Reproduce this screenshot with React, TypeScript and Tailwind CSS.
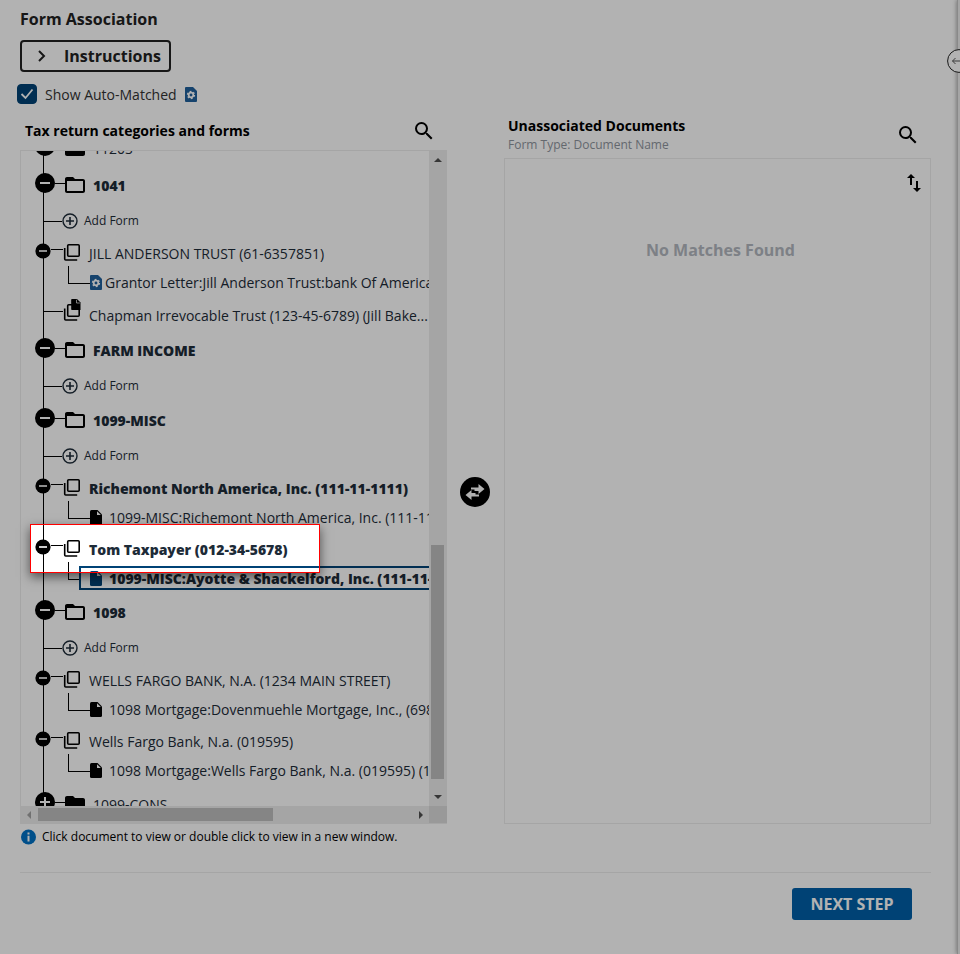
import clsx from 'clsx'
import React, { useState } from 'react'
import { MdFolder, MdFolderOpen, MdSearch } from 'react-icons/md'

// ─── Tree data ───────────────────────────────────────────────────────────────

type TreeRow =
  | { kind: 'category'; label: string; open?: boolean; tall?: boolean }
  | { kind: 'add' }
  | { kind: 'form'; label: string; bold?: boolean }
  | { kind: 'prior'; label: string }
  | { kind: 'doc'; label: string; auto?: boolean; selected?: boolean }

const ROWS: TreeRow[] = [
  { kind: 'category', label: '1120S', tall: true },
  { kind: 'category', label: '1041', open: true },
  { kind: 'add' },
  { kind: 'form', label: 'JILL ANDERSON TRUST (61-6357851)' },
  {
    kind: 'doc',
    label: 'Grantor Letter:Jill Anderson Trust:bank Of America',
    auto: true,
  },
  { kind: 'prior', label: 'Chapman Irrevocable Trust (123-45-6789) (Jill Bake...' },
  { kind: 'category', label: 'FARM INCOME', open: true },
  { kind: 'add' },
  { kind: 'category', label: '1099-MISC', open: true },
  { kind: 'add' },
  { kind: 'form', label: 'Richemont North America, Inc. (111-11-1111)', bold: true },
  { kind: 'doc', label: '1099-MISC:Richemont North America, Inc. (111-11-1111)' },
  { kind: 'form', label: 'Tom Taxpayer (012-34-5678)', bold: true },
  {
    kind: 'doc',
    label: '1099-MISC:Ayotte & Shackelford, Inc. (111-11-1111)',
    selected: true,
  },
  { kind: 'category', label: '1098', open: true },
  { kind: 'add' },
  { kind: 'form', label: 'WELLS FARGO BANK, N.A. (1234 MAIN STREET)' },
  { kind: 'doc', label: '1098 Mortgage:Dovenmuehle Mortgage, Inc., (698)' },
  { kind: 'form', label: 'Wells Fargo Bank, N.a. (019595)' },
  { kind: 'doc', label: '1098 Mortgage:Wells Fargo Bank, N.a. (019595) (1)' },
  { kind: 'category', label: '1099-CONS' },
]

// ─── Icons ───────────────────────────────────────────────────────────────────

function Toggle({ open, size }: { open: boolean; size: 'lg' | 'sm' }) {
  return (
    <svg
      viewBox="0 0 20 20"
      className={clsx(
        'relative block shrink-0',
        size === 'lg' ? 'size-5' : 'size-4',
      )}>
      <circle cx="10" cy="10" r={size === 'lg' ? 10 : 9.5} fill="#000" />
      <path
        d={open ? 'M5 10h10' : 'M5 10h10M10 5v10'}
        stroke="#fff"
        strokeWidth="2"
      />
    </svg>
  )
}

function StackIcon() {
  return (
    <svg viewBox="0 0 17 17" className="mb-[3px] size-[17px] shrink-0" fill="none">
      <rect x="4.7" y=".8" width="11.500" height="11.500" rx="1" stroke="#000" strokeWidth="1.600" />
      <path d="M1.700 4V15q0 1 1 1h11.500" stroke="#000" strokeWidth="1.600" />
    </svg>
  )
}

function PriorStackIcon() {
  return (
    <svg viewBox="0 0 18 22" className="mb-2.5 h-[22px] w-[18px] shrink-0" fill="none">
      <rect x="4.700" y="5.800" width="11.500" height="11.500" rx="1" stroke="#000" strokeWidth="1.600" />
      <path d="M1.700 9.500V20q0 1 1 1h11.500" stroke="#000" strokeWidth="1.600" />
      <path d="M9 0h5L17.500 3.500V11H9q-.8 0-.8-.8V.8Q8.200 0 9 0z" fill="#000" />
      <path d="M13.500 .8V4h3.400" stroke="#fff" strokeWidth=".7" />
    </svg>
  )
}

function FileIcon({ color }: { color: string }) {
  return (
    <svg viewBox="0 0 12 15" className="h-[15px] w-3 shrink-0">
      <path
        d="M1.500 0H7.500L12 4.500V13.500Q12 15 10.500 15H1.500Q0 15 0 13.500V1.500Q0 0 1.500 0z"
        fill={color}
      />
      <path d="M7 1.200V5h3.900z" fill="#fff" />
    </svg>
  )
}

function AutoFileIcon() {
  return (
    <svg viewBox="0 0 12 15" className="h-[15px] w-3 shrink-0">
      <path
        d="M1 0H8L12 4V14Q12 15 11 15H1Q0 15 0 14V1Q0 0 1 0z"
        fill="#20609c"
      />
      <g stroke="#fff" fill="none">
        <circle cx="6" cy="8" r="2.300" strokeWidth="1.700" />
        <circle cx="6" cy="8" r="3.600" strokeWidth="1.100" strokeDasharray="1.900 1.870" />
      </g>
    </svg>
  )
}

function AddIcon() {
  return (
    <svg viewBox="0 0 16 16" className="size-4 shrink-0" fill="none" stroke="#1d2b38">
      <circle cx="8" cy="8" r="7" strokeWidth="1.400" />
      <path d="M4 8h8M8 4v8" strokeWidth="1.600" />
    </svg>
  )
}

function SwapIcon() {
  return (
    <svg viewBox="0 0 30 30" className="block size-[30px]">
      <circle cx="15" cy="15" r="15" fill="#000" />
      <path
        d="M11 10.500h7.500V7l6 5-6 5v-3H14.500v-1.500H11zM19 19.500h-7.500V23l-6-5 6-5v3h4v1.500H19z"
        fill="#fff"
      />
    </svg>
  )
}

function SortIcon() {
  return (
    <svg viewBox="0 0 14 18" className="h-[18px] w-3.5">
      <path
        d="M0 4L4 0l4 4H5v7H3V4zM6 14h3V7h2v7h3l-4 4z"
        fill="#000"
      />
    </svg>
  )
}

// ─── Tree rows ───────────────────────────────────────────────────────────────

function Row({ row }: { row: TreeRow }) {
  switch (row.kind) {
    case 'category': {
      const Folder = row.open ? MdFolderOpen : MdFolder
      return (
        <li
          className={clsx(
            'flex items-center pl-3.5',
            row.tall ? 'h-[38px]' : 'h-9',
          )}>
          <button
            type="button"
            aria-label={`Toggle ${row.label}`}
            className="mb-1.5 flex items-center">
            <Toggle open={!!row.open} size="lg" />
            <span className="h-px w-2.5 bg-black" />
          </button>
          <Folder className="-mx-0.5 mb-0.5 size-6 shrink-0" color="#000" />
          <span className={clsx('mb-0.5 ml-2', row.open && 'font-extrabold')}>
            {row.label}
          </span>
        </li>
      )
    }
    case 'add':
      return (
        <li className="flex h-[34px] items-center pl-[22px]">
          <span className="h-px w-[19px] bg-black" />
          <button type="button" className="flex items-center gap-1.5 text-xs">
            <AddIcon />
            Add Form
          </button>
        </li>
      )
    case 'form':
      return (
        <li className="flex h-[31px] items-center pl-3.5">
          <button
            type="button"
            aria-label={`Toggle ${row.label}`}
            className="mb-[5px]">
            <Toggle open size="sm" />
          </button>
          <span className="mb-2 h-px w-3 bg-black" />
          <StackIcon />
          <span className={clsx('ml-[9px]', row.bold && 'font-extrabold')}>
            {row.label}
          </span>
        </li>
      )
    case 'prior':
      return (
        <li className="flex h-[34px] items-center pb-0.5 pl-[22px]">
          <span className="mb-2 h-px w-5 bg-black" />
          <PriorStackIcon />
          <span className="ml-2">{row.label}</span>
        </li>
      )
    case 'doc':
      return (
        <li className="relative flex h-[30px] items-center pb-1 pl-[58px]">
          <span
            className={clsx(
              'absolute -top-[3px] left-[47px] h-[18px] border-b border-l border-black',
              row.selected ? 'w-[11px]' : 'w-[22px]',
            )}
          />
          <button
            type="button"
            className={clsx(
              'flex h-6 items-center border-2 px-[9px]',
              row.auto ? 'gap-[3px]' : 'gap-[7px]',
              row.selected
                ? 'border-[#004376] font-extrabold'
                : 'border-transparent',
            )}>
            {row.auto ? (
              <AutoFileIcon />
            ) : (
              <FileIcon color={row.selected ? '#004376' : '#000'} />
            )}
            {row.label}
          </button>
        </li>
      )
  }
}

function Tree() {
  return (
    <div className="relative">
      <div className="grid h-[674px] grid-cols-[minmax(0,1fr)_18px] grid-rows-[minmax(0,1fr)_17px] border border-r-0 border-[#ededed]">
        <div className="overflow-hidden">
          <ul className="relative -mt-[21px] text-[14px] whitespace-nowrap text-[#1d2b38]">
            <li
              aria-hidden="true"
              className="absolute top-0 bottom-5 left-[22px] w-px bg-black"
            />
            {ROWS.map((row, i) => (
              <Row key={i} row={row} />
            ))}
          </ul>
        </div>

        {/* Vertical scrollbar */}
        <div className="flex flex-col items-center bg-[#ededed] py-[5px] pr-[3px] pl-0.5">
          <svg viewBox="0 0 8 4" className="mt-0.5 h-1 w-2">
            <path d="M0 4l4-4 4 4z" fill="#505050" />
          </svg>
          <div className="mt-auto mb-4 h-[234px] w-[13px] bg-[#bfbfbf]" />
          <svg viewBox="0 0 8 4" className="mb-0.5 h-1 w-2">
            <path d="M0 0l4 4 4-4z" fill="#505050" />
          </svg>
        </div>

        {/* Horizontal scrollbar */}
        <div className="flex items-center bg-[#ededed] px-1.5">
          <svg viewBox="0 0 4 8" className="h-2 w-1">
            <path d="M4 0L0 4l4 4z" fill="#a3a3a3" />
          </svg>
          <div className="ml-[7px] h-[13px] w-[235px] bg-[#bfbfbf]" />
          <svg viewBox="0 0 4 8" className="ml-auto h-2 w-1">
            <path d="M0 0l4 4-4 4z" fill="#505050" />
          </svg>
        </div>
        <div className="bg-[#dcdcdc]" />
      </div>

      {/* Tour spotlight, its spread shadow dims the rest of the page */}
      <div className="pointer-events-none absolute top-[374px] left-2.5 z-10 h-[49px] w-[290px] border border-[#ff0000] shadow-[0_4px_10px_rgba(0,0,0,0.55),0_0_0_2000px_rgba(0,0,0,0.3)]" />
    </div>
  )
}

// ─── Page ────────────────────────────────────────────────────────────────────

export default function App() {
  const [showMatched, setShowMatched] = useState(true)

  return (
    <div className="relative flex min-h-screen overflow-hidden bg-white font-['Open_Sans',sans-serif] text-black">
      <main className="min-w-0 flex-1 pt-2 pr-[26px] pl-5">
        <h1 className="text-base leading-[22px] font-bold text-[#222]">
          Form Association
        </h1>
        <button
          type="button"
          className="mt-2.5 flex h-8 items-center rounded-[4px] border-2 border-[#222] pr-2 pl-4 text-base font-bold text-[#222]">
          <svg viewBox="0 0 8 12" className="mr-[18px] h-3 w-2" fill="none">
            <path d="M1 1l5 5-5 5" stroke="#222" strokeWidth="2" />
          </svg>
          Instructions
        </button>

        <div className="mt-3 -ml-[3px] flex h-5 items-center">
          <span className="relative block size-5">
            <input
              id="auto-matched"
              type="checkbox"
              checked={showMatched}
              onChange={e => setShowMatched(e.target.checked)}
              className="block size-5 appearance-none rounded-[4px] border border-[#004376] checked:bg-[#004376]"
            />
            {showMatched && (
              <svg
                viewBox="0 0 20 20"
                className="pointer-events-none absolute inset-0"
                fill="none">
                <path d="M4.500 10l4 4 7-8.500" stroke="#fff" strokeWidth="1.800" />
              </svg>
            )}
          </span>
          <label
            htmlFor="auto-matched"
            className="mr-2 ml-2 pt-0.5 text-sm text-[#333]">
            Show Auto-Matched
          </label>
          <AutoFileIcon />
        </div>

        <div className="grid grid-cols-[minmax(0,1fr)_57px_minmax(0,1fr)]">
          <section>
            <div className="flex h-[46px] items-center justify-between pt-2 pr-[11px] pl-[5px]">
              <h2 className="text-sm font-bold">Tax return categories and forms</h2>
              <button type="button" aria-label="Search forms">
                <MdSearch className="size-6" />
              </button>
            </div>
            <Tree />
          </section>

          <div className="flex pt-[373px] pl-[13px]">
            <button type="button" aria-label="Associate" className="self-start">
              <SwapIcon />
            </button>
          </div>

          <section className="flex flex-col">
            <div className="flex h-[54px] items-center justify-between pt-2 pr-[11px] pl-1">
              <div>
                <h2 className="text-sm font-bold">Unassociated Documents</h2>
                <p className="text-xs leading-[18px] text-[#8f959e]">
                  Form Type: Document Name
                </p>
              </div>
              <button type="button" aria-label="Search documents">
                <MdSearch className="size-6" />
              </button>
            </div>
            <div className="flex flex-1 flex-col border border-[#ededed]">
              <button
                type="button"
                aria-label="Sort"
                className="mt-[15px] mr-[9px] self-end">
                <SortIcon />
              </button>
              <p className="mt-[46px] pl-1.5 text-center text-base font-bold text-[#b3b8c0]">
                No Matches Found
              </p>
            </div>
          </section>
        </div>

        <p className="mt-1 flex h-[18px] items-center gap-1.5 text-xs">
          <svg viewBox="0 0 16 16" className="size-4 shrink-0">
            <circle cx="8.500" cy="8" r="7.500" fill="#0072c6" />
            <path d="M8.500 3.500v2M8.500 6.700v5.800" stroke="#fff" strokeWidth="2" />
          </svg>
          Click document to view or double click to view in a new window.
        </p>

        <footer className="mt-[26px] flex justify-end border-t border-[#ededed] pt-[15px] pr-[19px] pb-8">
          <button
            type="button"
            className="h-8 w-[120px] rounded-[3px] bg-[#005fa8] text-base font-bold text-white">
            NEXT STEP
          </button>
        </footer>
      </main>

      {/* Collapsed side panel */}
      <aside className="w-[3px] border-l border-[#c4c4c4] bg-[#ececec] shadow-[0_0_4px_rgba(0,0,0,0.5)]" />
      <button
        type="button"
        aria-label="Expand panel"
        className="absolute top-[49px] -right-[11px] size-6">
        <svg viewBox="0 0 24 24" fill="none">
          <circle cx="12" cy="12" r="11.400" fill="#fff" stroke="#222" />
          <path d="M18 12H5.500M8.500 9l-3 3 3 3" stroke="#555" />
        </svg>
      </button>
    </div>
  )
}
